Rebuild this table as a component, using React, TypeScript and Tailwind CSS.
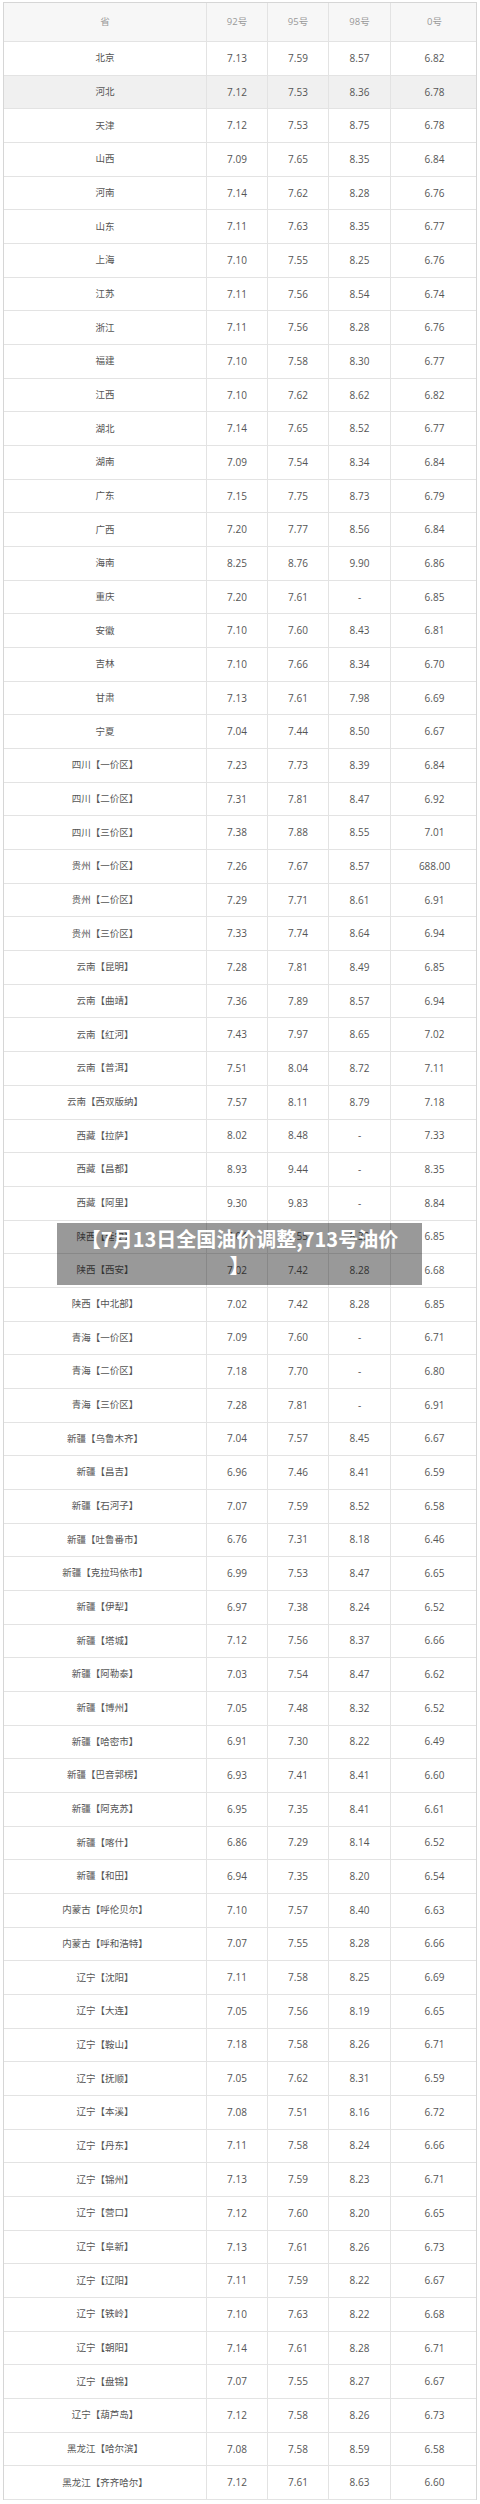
type Row = [string, string, string, string, string];

const rows: Row[] = [
  ["北京", "7.13", "7.59", "8.57", "6.82"],
  ["河北", "7.12", "7.53", "8.36", "6.78"],
  ["天津", "7.12", "7.53", "8.75", "6.78"],
  ["山西", "7.09", "7.65", "8.35", "6.84"],
  ["河南", "7.14", "7.62", "8.28", "6.76"],
  ["山东", "7.11", "7.63", "8.35", "6.77"],
  ["上海", "7.10", "7.55", "8.25", "6.76"],
  ["江苏", "7.11", "7.56", "8.54", "6.74"],
  ["浙江", "7.11", "7.56", "8.28", "6.76"],
  ["福建", "7.10", "7.58", "8.30", "6.77"],
  ["江西", "7.10", "7.62", "8.62", "6.82"],
  ["湖北", "7.14", "7.65", "8.52", "6.77"],
  ["湖南", "7.09", "7.54", "8.34", "6.84"],
  ["广东", "7.15", "7.75", "8.73", "6.79"],
  ["广西", "7.20", "7.77", "8.56", "6.84"],
  ["海南", "8.25", "8.76", "9.90", "6.86"],
  ["重庆", "7.20", "7.61", "-", "6.85"],
  ["安徽", "7.10", "7.60", "8.43", "6.81"],
  ["吉林", "7.10", "7.66", "8.34", "6.70"],
  ["甘肃", "7.13", "7.61", "7.98", "6.69"],
  ["宁夏", "7.04", "7.44", "8.50", "6.67"],
  ["四川【一价区】", "7.23", "7.73", "8.39", "6.84"],
  ["四川【二价区】", "7.31", "7.81", "8.47", "6.92"],
  ["四川【三价区】", "7.38", "7.88", "8.55", "7.01"],
  ["贵州【一价区】", "7.26", "7.67", "8.57", "688.00"],
  ["贵州【二价区】", "7.29", "7.71", "8.61", "6.91"],
  ["贵州【三价区】", "7.33", "7.74", "8.64", "6.94"],
  ["云南【昆明】", "7.28", "7.81", "8.49", "6.85"],
  ["云南【曲靖】", "7.36", "7.89", "8.57", "6.94"],
  ["云南【红河】", "7.43", "7.97", "8.65", "7.02"],
  ["云南【普洱】", "7.51", "8.04", "8.72", "7.11"],
  ["云南【西双版纳】", "7.57", "8.11", "8.79", "7.18"],
  ["西藏【拉萨】", "8.02", "8.48", "-", "7.33"],
  ["西藏【昌都】", "8.93", "9.44", "-", "8.35"],
  ["西藏【阿里】", "9.30", "9.83", "-", "8.84"],
  ["陕西【延安】", "7.04", "7.55", "8.32", "6.85"],
  ["陕西【西安】", "7.02", "7.42", "8.28", "6.68"],
  ["陕西【中北部】", "7.02", "7.42", "8.28", "6.85"],
  ["青海【一价区】", "7.09", "7.60", "-", "6.71"],
  ["青海【二价区】", "7.18", "7.70", "-", "6.80"],
  ["青海【三价区】", "7.28", "7.81", "-", "6.91"],
  ["新疆【乌鲁木齐】", "7.04", "7.57", "8.45", "6.67"],
  ["新疆【昌吉】", "6.96", "7.46", "8.41", "6.59"],
  ["新疆【石河子】", "7.07", "7.59", "8.52", "6.58"],
  ["新疆【吐鲁番市】", "6.76", "7.31", "8.18", "6.46"],
  ["新疆【克拉玛依市】", "6.99", "7.53", "8.47", "6.65"],
  ["新疆【伊犁】", "6.97", "7.38", "8.24", "6.52"],
  ["新疆【塔城】", "7.12", "7.56", "8.37", "6.66"],
  ["新疆【阿勒泰】", "7.03", "7.54", "8.47", "6.62"],
  ["新疆【博州】", "7.05", "7.48", "8.32", "6.52"],
  ["新疆【哈密市】", "6.91", "7.30", "8.22", "6.49"],
  ["新疆【巴音郭楞】", "6.93", "7.41", "8.41", "6.60"],
  ["新疆【阿克苏】", "6.95", "7.35", "8.41", "6.61"],
  ["新疆【喀什】", "6.86", "7.29", "8.14", "6.52"],
  ["新疆【和田】", "6.94", "7.35", "8.20", "6.54"],
  ["内蒙古【呼伦贝尔】", "7.10", "7.57", "8.40", "6.63"],
  ["内蒙古【呼和浩特】", "7.07", "7.55", "8.28", "6.66"],
  ["辽宁【沈阳】", "7.11", "7.58", "8.25", "6.69"],
  ["辽宁【大连】", "7.05", "7.56", "8.19", "6.65"],
  ["辽宁【鞍山】", "7.18", "7.58", "8.26", "6.71"],
  ["辽宁【抚顺】", "7.05", "7.62", "8.31", "6.59"],
  ["辽宁【本溪】", "7.08", "7.51", "8.16", "6.72"],
  ["辽宁【丹东】", "7.11", "7.58", "8.24", "6.66"],
  ["辽宁【锦州】", "7.13", "7.59", "8.23", "6.71"],
  ["辽宁【营口】", "7.12", "7.60", "8.20", "6.65"],
  ["辽宁【阜新】", "7.13", "7.61", "8.26", "6.73"],
  ["辽宁【辽阳】", "7.11", "7.59", "8.22", "6.67"],
  ["辽宁【铁岭】", "7.10", "7.63", "8.22", "6.68"],
  ["辽宁【朝阳】", "7.14", "7.61", "8.28", "6.71"],
  ["辽宁【盘锦】", "7.07", "7.55", "8.27", "6.67"],
  ["辽宁【葫芦岛】", "7.12", "7.58", "8.26", "6.73"],
  ["黑龙江【哈尔滨】", "7.08", "7.58", "8.59", "6.58"],
  ["黑龙江【齐齐哈尔】", "7.12", "7.61", "8.63", "6.60"],
];

const cols = "grid grid-cols-[203px_61px_61px_62px_87px]";
const cell = "flex items-center justify-center border-r border-[#e3e3e3]";

function PriceRow({ row, shaded }: { row: Row; shaded: boolean }) {
  return (
    <div className={`${cols} h-[33.68px] border-b border-[#e3e3e3] ${shaded ? "bg-[#f0f0f0]" : "bg-white"}`}>
      <div className={`${cell} text-[9.5px] text-[#555]`}>{row[0]}</div>
      <div className={`${cell} text-[10px] text-[#555]`}>{row[1]}</div>
      <div className={`${cell} text-[10px] text-[#555]`}>{row[2]}</div>
      <div className={`${cell} text-[10px] text-[#555]`}>{row[3]}</div>
      <div className="flex items-center justify-center text-[10px] text-[#555]">{row[4]}</div>
    </div>
  );
}

export default function App() {
  return (
    <div className="relative w-[480px] h-[2504px] bg-white font-['Open_Sans','Noto_Sans_CJK_SC',sans-serif]">
      {/* oil price table */}
      <div className="ml-[3px] mt-[2px] w-[474px] border-t border-l border-r border-[#d6d6d6]">
        <div className={`${cols} h-[39px] border-b border-[#e3e3e3] bg-[#f7f7f7] text-[9.5px] text-[#999]`}>
          <div className={cell}>省</div>
          <div className={cell}>92号</div>
          <div className={cell}>95号</div>
          <div className={cell}>98号</div>
          <div className="flex items-center justify-center">0号</div>
        </div>
        {rows.map((r, i) => (
          <PriceRow key={i} row={r} shaded={i === 1} />
        ))}
      </div>

      {/* caption over the picture */}
      <div className="absolute left-[57px] top-[1221px] w-[365px] h-[62px] bg-black/40 px-2 pt-[3px] text-center">
        <p className="text-[20px] leading-[26px] font-bold text-white font-['Noto_Sans_CJK_SC',sans-serif]">
          【7月13日全国油价调整,713号油价
          <br />】
        </p>
      </div>
    </div>
  );
}
